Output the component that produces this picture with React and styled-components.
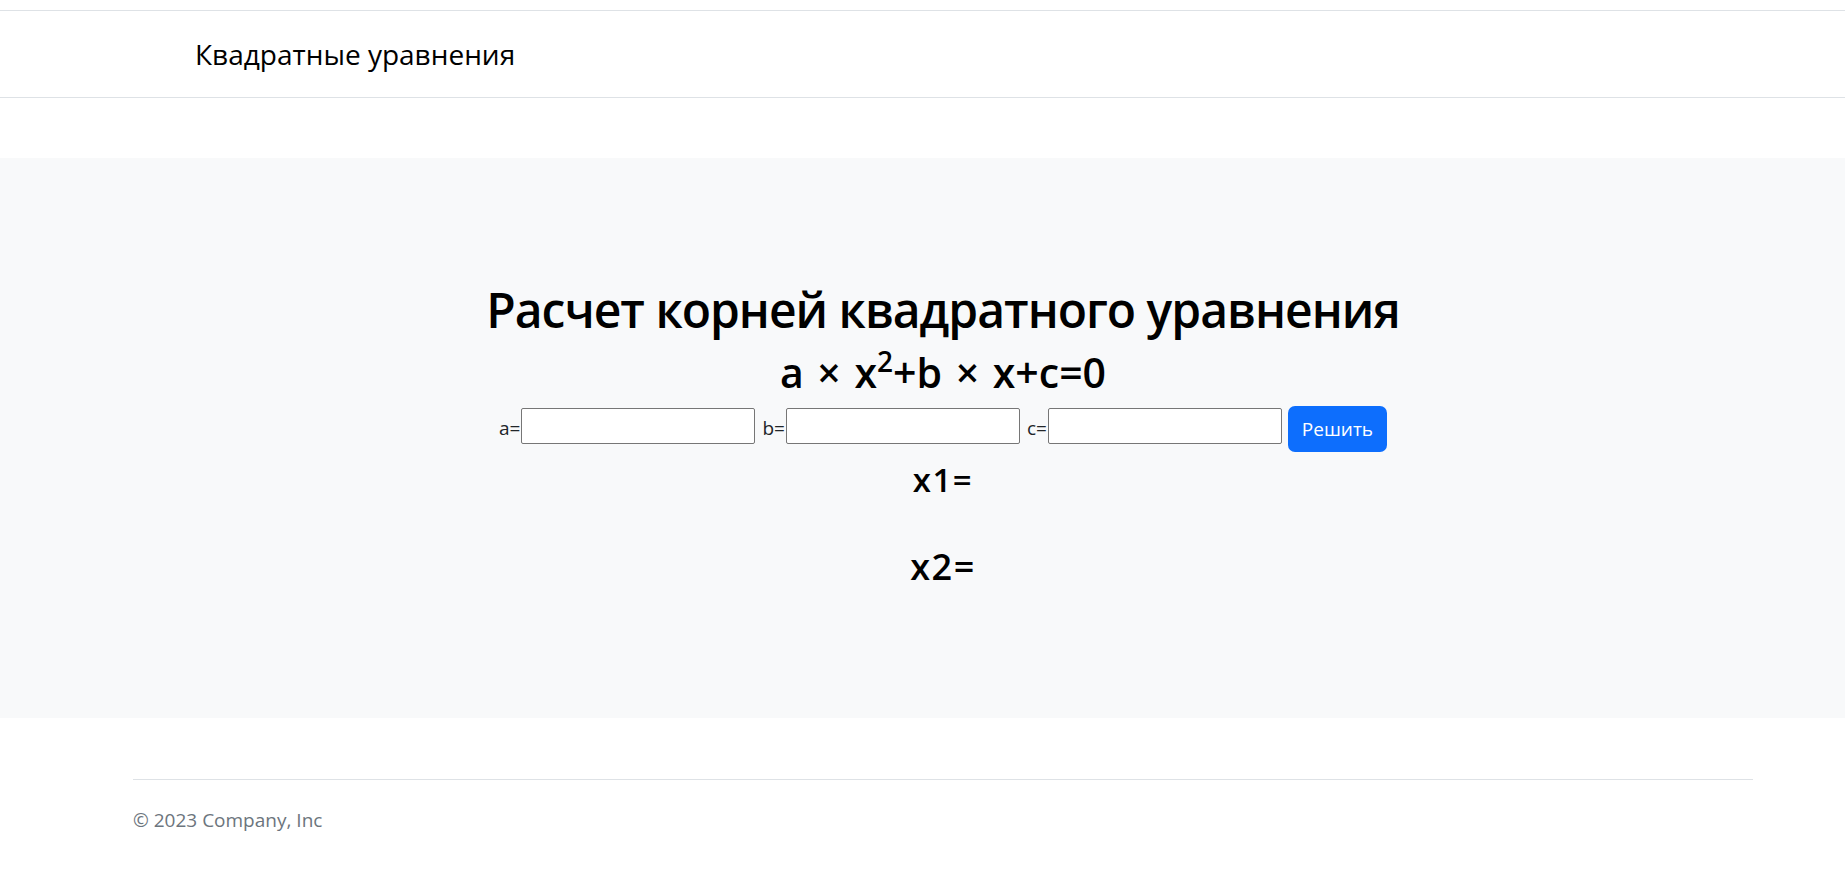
import React from "react"
import styled, { createGlobalStyle } from "styled-components"

const GlobalStyle = createGlobalStyle`
	html, body {
		margin: 0;
		padding: 0;
		background: #ffffff;
		overflow-x: hidden;
	}
	body {
		font-family: "Open Sans", "Noto Sans", sans-serif;
		color: #212529;
	}
`

const Page = styled.div`
	width: 1886px;
	padding-top: 10px;
`

const Header = styled.header`
	height: 86px;
	border-top: 1px solid #dee2e6;
	border-bottom: 1px solid #dee2e6;
	box-sizing: content-box;
`

const HeaderInner = styled.div`
	width: 1620px;
	margin: 0 auto;
	padding-left: 62px;
	box-sizing: border-box;
	font-size: 28px;
	line-height: 86px;
	color: #000;
`

const Hero = styled.main`
	margin-top: 60px;
	height: 560px;
	background: #f8f9fa;
	padding-top: 122px;
	box-sizing: border-box;
	display: flex;
	flex-direction: column;
	align-items: center;
	color: #000;
`

const Title = styled.h1`
	margin: 0;
	font-size: 48px;
	font-weight: 600;
	line-height: 60px;
	letter-spacing: -1px;
`

const Formula = styled.h2`
	margin: 8px 0 0;
	font-size: 41px;
	font-weight: 600;
	line-height: 48px;
	word-spacing: 3px;

	sup {
		font-size: 28px;
		line-height: 0;
		vertical-align: 16px;
	}
`

const Form = styled.form`
	margin-top: 10px;
	display: flex;
	align-items: flex-start;
	height: 46px;
`

const Field = styled.label`
	display: flex;
	align-items: flex-start;
	margin-right: ${(p) => (p.last ? "6px" : "7px")};
`

const Label = styled.span`
	margin-top: 10px;
	font-size: 19px;
	line-height: 24px;
	color: #212529;
	margin-right: 1px;
`

const Input = styled.input`
	margin-top: 2px;
	width: 234px;
	height: 36px;
	box-sizing: border-box;
	border: 1px solid #767676;
	border-radius: 2px;
	background: #fff;
	padding: 1px 2px;
	font-size: 16px;
	outline: none;
`

const Button = styled.button`
	width: 99px;
	height: 46px;
	border: none;
	border-radius: 7px;
	background: #0d6efd;
	color: #fff;
	font-family: "Open Sans", "Noto Sans", sans-serif;
	font-size: 19px;
	padding: 0;
	cursor: pointer;
`

const Root = styled.h3`
	margin: ${(p) => p.gap}px 0 0;
	font-weight: 600;
	font-size: ${(p) => p.size}px;
	line-height: ${(p) => p.lh}px;
	letter-spacing: ${(p) => p.spacing}px;
`

const Footer = styled.footer`
	width: 1620px;
	margin: 61px auto 0;
	border-top: 1px solid #dee2e6;
	padding-top: 27px;
	padding-bottom: 20px;
	font-size: 19px;
	line-height: 27px;
	color: #6c757d;
`

export default function App() {
	return (
		<>
			<GlobalStyle />
			<Page>
				<Header>
					<HeaderInner>Квадратные уравнения</HeaderInner>
				</Header>
				<Hero>
					<Title>Расчет корней квадратного уравнения</Title>
					<Formula>
						a × x<sup>2</sup>+b × x+c=0
					</Formula>
					<Form onSubmit={(e) => e.preventDefault()}>
						<Field>
							<Label>a=</Label>
							<Input type="text" />
						</Field>
						<Field>
							<Label>b=</Label>
							<Input type="text" />
						</Field>
						<Field last>
							<Label>c=</Label>
							<Input type="text" />
						</Field>
						<Button type="submit">Решить</Button>
					</Form>
					<Root size={33} lh={40} gap={8} spacing={1.5}>x1=</Root>
					<Root size={36} lh={43} gap={45} spacing={1.5}>x2=</Root>
				</Hero>
				<Footer>© 2023 Company, Inc</Footer>
			</Page>
		</>
	)
}
